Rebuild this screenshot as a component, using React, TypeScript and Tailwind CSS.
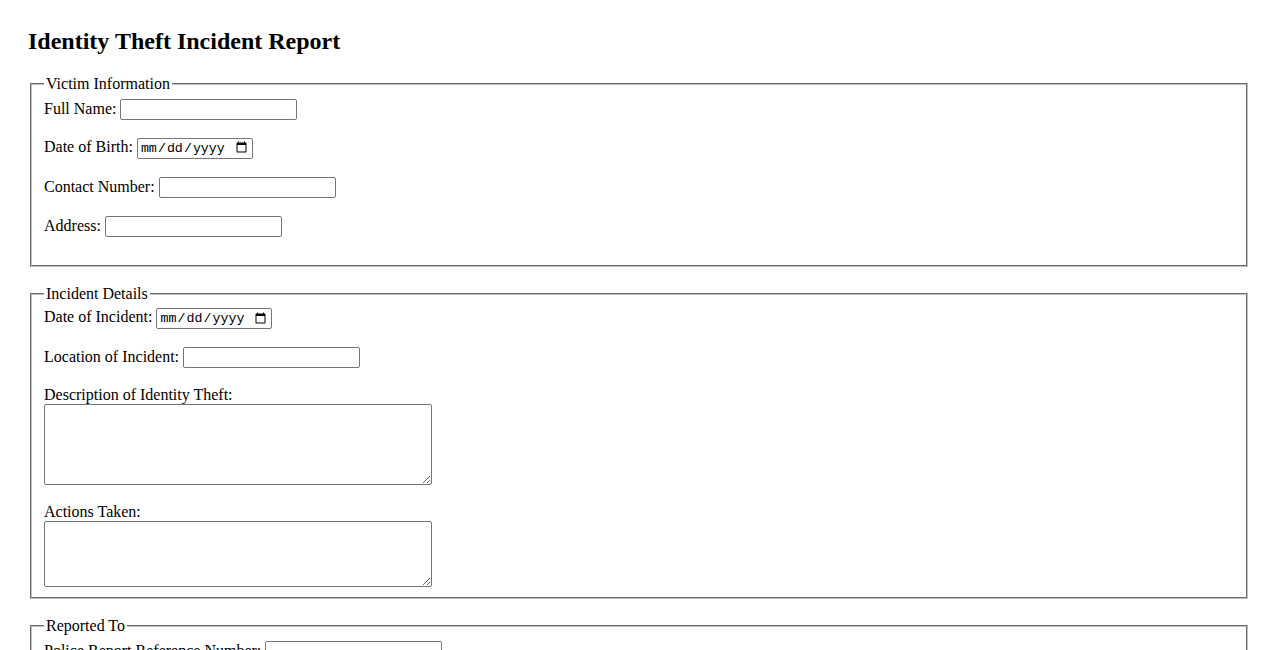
export default function App() {
  const fieldset =
    "mx-[2px] mb-[18px] border-2 border-[rgb(192,192,192)] [border-style:groove] px-3 pt-[5.6px] pb-[10px]"
  const legend = "px-[2px]"
  const input =
    "h-[21px] w-[177px] rounded-[2px] border border-[#767676] bg-white px-[2px] py-[1px] align-baseline text-[13.33px] [font-family:'Liberation_Sans',Arial,sans-serif]"
  const date =
    "h-[21px] w-[116px] rounded-[2px] border border-[#767676] bg-white px-[2px] py-[1px] align-baseline text-[13.33px] [font-family:'Liberation_Mono',monospace]"
  const textarea =
    "w-[388px] resize rounded-[2px] border border-[#767676] bg-white p-[2px] align-top text-[13.33px] [font-family:'Liberation_Mono',monospace]"

  return (
    <div className="min-h-screen bg-white px-7 pt-7 text-base leading-[normal] text-black [font-family:'Liberation_Serif','Times_New_Roman',serif]">
      <h2 className="mb-5 text-2xl font-bold leading-[normal]">Identity Theft Incident Report</h2>

      <form>
        <fieldset className={fieldset}>
          <legend className={legend}>Victim Information</legend>
          <label htmlFor="name">Full Name: </label>
          <input id="name" type="text" className={input} />
          <br />
          <br />
          <label htmlFor="dob">Date of Birth: </label>
          <input id="dob" type="date" className={date} />
          <br />
          <br />
          <label htmlFor="phone">Contact Number: </label>
          <input id="phone" type="text" className={input} />
          <br />
          <br />
          <label htmlFor="address">Address: </label>
          <input id="address" type="text" className={input} />
          <br />
          <br />
        </fieldset>

        <fieldset className={fieldset}>
          <legend className={legend}>Incident Details</legend>
          <label htmlFor="incidentDate">Date of Incident: </label>
          <input id="incidentDate" type="date" className={date} />
          <br />
          <br />
          <label htmlFor="location">Location of Incident: </label>
          <input id="location" type="text" className={input} />
          <br />
          <br />
          <label htmlFor="description">Description of Identity Theft:</label>
          <br />
          <textarea id="description" className={`${textarea} h-[81px]`} />
          <br />
          <br />
          <label htmlFor="actions">Actions Taken:</label>
          <br />
          <textarea id="actions" className={`${textarea} h-[66px]`} />
        </fieldset>

        <fieldset className={fieldset}>
          <legend className={legend}>Reported To</legend>
          <label htmlFor="policeRef">Police Report Reference Number: </label>
          <input id="policeRef" type="text" className={input} />
          <br />
          <br />
          <label htmlFor="agency">Agency Name: </label>
          <input id="agency" type="text" className={input} />
          <br />
          <br />
        </fieldset>
      </form>
    </div>
  )
}
